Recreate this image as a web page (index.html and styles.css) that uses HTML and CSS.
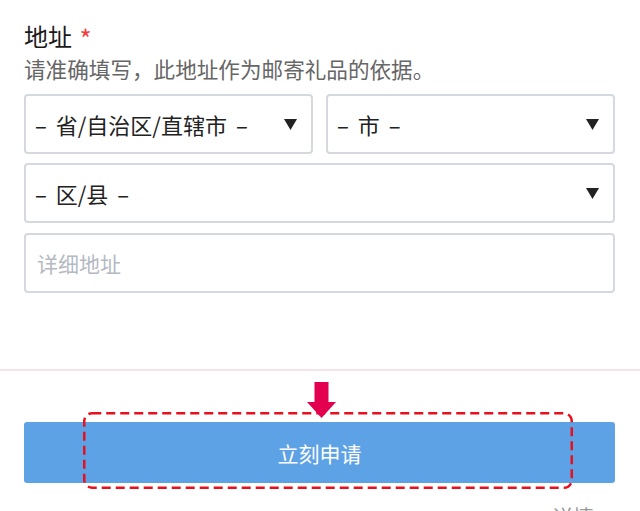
FILE: index.html
```html
<!DOCTYPE html>
<html lang="zh-CN">
<head>
<meta charset="utf-8">
<link rel="stylesheet" href="styles.css">
</head>
<body>
<div class="form">
  <div class="label">地址 <span class="req">*</span></div>
  <div class="hint">请准确填写，此地址作为邮寄礼品的依据。</div>
  <div class="row">
    <div class="select"><span>– 省/自治区/直辖市 –</span><svg class="caret" width="13" height="11" viewBox="0 0 13 11"><polygon points="0,0 13,0 6.5,11" fill="#222"/></svg></div>
    <div class="select"><span>– 市 –</span><svg class="caret" width="13" height="11" viewBox="0 0 13 11"><polygon points="0,0 13,0 6.5,11" fill="#222"/></svg></div>
  </div>
  <div class="row">
    <div class="select"><span>– 区/县 –</span><svg class="caret" width="13" height="11" viewBox="0 0 13 11"><polygon points="0,0 13,0 6.5,11" fill="#222"/></svg></div>
  </div>
  <div class="row">
    <div class="input">详细地址</div>
  </div>
</div>
<div class="divider"></div>
<div class="footer">
  <div class="btn-wrap">
    <div class="btn">立刻申请</div>
    <svg class="dash" width="490" height="77" viewBox="0 0 490 77"><rect x="1.25" y="1.25" width="487.5" height="74.5" rx="8" ry="8" fill="none" stroke="#ea0f1c" stroke-width="2.5" stroke-dasharray="9 5"/></svg>
    <svg class="arrow" width="30" height="36" viewBox="0 0 30 36"><rect x="7.5" y="0" width="14" height="21" fill="#e3004f"/><polygon points="0,20 29,20 14.5,36" fill="#e3004f"/></svg>
  </div>
  <div class="more">详情</div>
</div>
</body>
</html>
```
FILE: styles.css
```css
html, body {
  margin: 0;
  padding: 0;
  background: #fff;
  font-family: "Noto Sans CJK SC", "Noto Sans", sans-serif;
  color: #222;
  overflow: hidden;
  height: 511px;
}
.form {
  padding: 19px 25px 0 24px;
}
.label {
  font-size: 24px;
  line-height: 34px;
  height: 34px;
  color: #1a1a1a;
}
.req {
  color: #f23c3c;
  font-size: 26px;
  line-height: 0;
  position: relative;
  top: 3px;
  margin-left: 2px;
}
.hint {
  font-size: 21.6px;
  line-height: 32px;
  color: #666;
}
.row {
  display: flex;
  gap: 13px;
  margin-top: 9px;
}
.select, .input {
  flex: 1;
  height: 60px;
  box-sizing: border-box;
  border: 2px solid #d5d8de;
  border-radius: 4px;
  display: flex;
  align-items: center;
  justify-content: space-between;
  padding: 0 14px 0 9px;
  font-size: 22px;
  word-spacing: 4px;
  color: #222;
  background: #fff;
}
.input {
  color: #b5b9c2;
  justify-content: flex-start;
  padding-left: 11px;
  font-size: 21px;
  word-spacing: 0;
}
.row + .row + .row { margin-top: 10px; }
.caret { flex: none; }
.divider {
  height: 2px;
  background: #f7e4ea;
  margin-top: 76px;
}
.footer {
  padding: 0 25px 0 24px;
}
.btn-wrap {
  position: relative;
  margin-top: 51px;
}
.btn {
  height: 61px;
  background: #5ea2e6;
  border-radius: 3px;
  color: #fff;
  font-size: 21px;
  display: flex;
  align-items: center;
  justify-content: center;
}
.dash {
  position: absolute;
  left: 59px;
  top: -10px;
}
.arrow {
  position: absolute;
  left: 283px;
  top: -40px;
}
.more {
  text-align: right;
  padding-right: 21px;
  margin-top: 18px;
  font-size: 21px;
  color: #999;
  line-height: 30px;
}
```
